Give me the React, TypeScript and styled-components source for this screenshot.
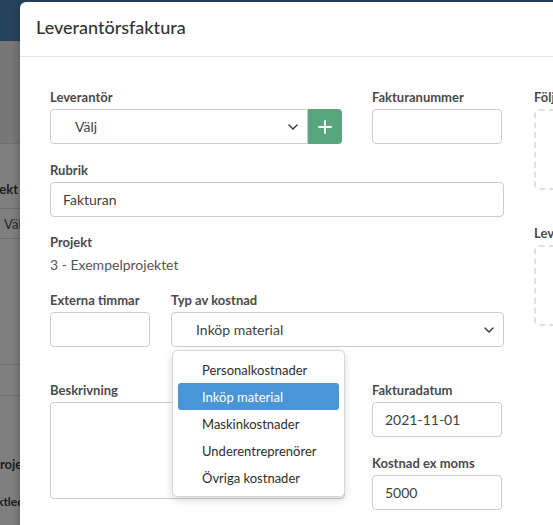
import React from 'react';
import styled, { createGlobalStyle } from 'styled-components';

const GlobalStyle = createGlobalStyle`
    html, body {
        margin: 0;
        padding: 0;
        width: 553px;
        height: 525px;
        overflow: hidden;
        font-family: Lato, "Open Sans", sans-serif;
    }
`;

const costTypes = ['Personalkostnader', 'Inköp material', 'Maskinkostnader', 'Underentreprenörer', 'Övriga kostnader'];

const Chevron: React.FC = () => (
    <svg width="10" height="6" viewBox="0 0 10 6">
        <path d="M1 1l4 4 4-4" fill="none" stroke="#333" strokeWidth="1.4" strokeLinecap="round" strokeLinejoin="round" />
    </svg>
);

const PlusIcon: React.FC = () => (
    <svg width="14" height="14" viewBox="0 0 14 14">
        <path d="M7 1v12M1 7h12" stroke="#fff" strokeWidth="2" strokeLinecap="round" />
    </svg>
);

export default function App() {
    return (
        <>
            <GlobalStyle />
            <Page>
                <TopBar />
                <Toolbar />
                <TableHead>
                    <HeadText>Projekt</HeadText>
                </TableHead>
                <TableRow>
                    <RowText>Välj</RowText>
                </TableRow>
                <EmptyRow height={125} />
                <EmptyRow height={30} />
                <FooterArea>
                    <FooterText offset={-8}>Projekt</FooterText>
                    <FooterText offset={-31} small>
                        Projektledare
                    </FooterText>
                </FooterArea>
            </Page>
            <Modal>
                <ModalHeader>
                    <Title>Leverantörsfaktura</Title>
                </ModalHeader>
                <Body>
                    <Main>
                        <Row cols="292px 130px" gap={30} mb={18}>
                            <div>
                                <Label>Leverantör</Label>
                                <InputGroup>
                                    <Select width={258} pad={24} grouped>
                                        <span>Välj</span>
                                        <Chevron />
                                    </Select>
                                    <AddButton>
                                        <PlusIcon />
                                    </AddButton>
                                </InputGroup>
                            </div>
                            <div>
                                <Label>Fakturanummer</Label>
                                <Input />
                            </div>
                        </Row>
                        <Row cols="1fr" gap={0} mb={17}>
                            <div>
                                <Label>Rubrik</Label>
                                <Input>Fakturan</Input>
                            </div>
                        </Row>
                        <Row cols="1fr" gap={0} mb={17}>
                            <div>
                                <Label>Projekt</Label>
                                <Value>3 - Exempelprojektet</Value>
                            </div>
                        </Row>
                        <Row cols="100px 333px" gap={21} mb={35}>
                            <div>
                                <Label>Externa timmar</Label>
                                <Input />
                            </div>
                            <SelectField>
                                <Label>Typ av kostnad</Label>
                                <Select width={333} pad={24}>
                                    <span>Inköp material</span>
                                    <Chevron />
                                </Select>
                                <Menu>
                                    {costTypes.map((t) => (
                                        <MenuItem key={t} active={t === 'Inköp material'}>
                                            {t}
                                        </MenuItem>
                                    ))}
                                </Menu>
                            </SelectField>
                        </Row>
                        <Row cols="295px 130px" gap={27} mb={0}>
                            <div>
                                <Label>Beskrivning</Label>
                                <TextArea />
                            </div>
                            <Stack>
                                <div>
                                    <Label>Fakturadatum</Label>
                                    <Input>2021-11-01</Input>
                                </div>
                                <div>
                                    <Label>Kostnad ex moms</Label>
                                    <Input>5000</Input>
                                </div>
                            </Stack>
                        </Row>
                    </Main>
                    <Side>
                        <div>
                            <Label>Följesedel</Label>
                            <DropZone />
                        </div>
                        <div>
                            <Label>Leverantörsfaktura</Label>
                            <DropZone />
                        </div>
                    </Side>
                </Body>
            </Modal>
        </>
    );
}

const Page = styled.div`
    width: 553px;
    height: 525px;
    background: #7f7f7f;
    display: flex;
    flex-direction: column;
`;

const TopBar = styled.div`
    height: 41px;
    background: #26435c;
    flex-shrink: 0;
`;

const Toolbar = styled.div`
    height: 102px;
    background: #777777;
    border-bottom: 1px solid #6e6e6e;
    flex-shrink: 0;
`;

const TableHead = styled.div`
    height: 65px;
    display: flex;
    align-items: center;
    justify-content: flex-end;
    width: 20px;
    overflow: hidden;
    border-bottom: 1px solid #6a6a6a;
    box-sizing: border-box;
    padding: 25px 2px 0 0;
    flex-shrink: 0;
`;

const HeadText = styled.div`
    font-size: 13px;
    font-weight: 700;
    color: #1c1c1c;
    white-space: nowrap;
`;

const TableRow = styled.div`
    height: 30px;
    display: flex;
    align-items: center;
    width: 20px;
    overflow: hidden;
    border-bottom: 1px solid #6a6a6a;
    box-sizing: border-box;
    padding-left: 4px;
    flex-shrink: 0;
`;

const RowText = styled.div`
    font-size: 13px;
    color: #262626;
    white-space: nowrap;
`;

const EmptyRow = styled.div<{ height: number }>`
    height: ${(p) => p.height}px;
    width: 20px;
    border-bottom: 1px solid #6e6e6e;
    flex-shrink: 0;
`;

const FooterArea = styled.div`
    width: 20px;
    overflow: hidden;
    display: flex;
    flex-direction: column;
    gap: 22px;
    padding-top: 60px;
`;

const FooterText = styled.div<{ offset: number; small?: boolean }>`
    margin-left: ${(p) => p.offset}px;
    font-size: ${(p) => (p.small ? 12 : 13)}px;
    font-weight: 700;
    color: #1c1c1c;
    white-space: nowrap;
`;

const Modal = styled.div`
    position: absolute;
    left: 20px;
    top: 2px;
    width: 640px;
    height: 560px;
    background: #fff;
    border-radius: 6px;
    box-shadow: 0 3px 9px rgba(0, 0, 0, 0.3);
`;

const ModalHeader = styled.div`
    height: 55px;
    box-sizing: border-box;
    border-bottom: 1px solid #e5e5e5;
    display: flex;
    align-items: center;
    padding: 0 16px 4px;
`;

const Title = styled.h4`
    margin: 0;
    font-size: 18px;
    font-weight: 500;
    color: #333;
`;

const Body = styled.div`
    display: flex;
    gap: 30px;
    padding: 32px 30px 0;
`;

const Main = styled.div`
    width: 454px;
    display: flex;
    flex-direction: column;
`;

const Row = styled.div<{ cols: string; gap: number; mb: number }>`
    display: grid;
    grid-template-columns: ${(p) => p.cols};
    column-gap: ${(p) => p.gap}px;
    margin-bottom: ${(p) => p.mb}px;
    align-items: start;
`;

const Label = styled.label`
    display: block;
    font-size: 13px;
    line-height: 16px;
    font-weight: 700;
    color: #4a4a4a;
    margin-bottom: 4px;
    white-space: nowrap;
`;

const Value = styled.div`
    font-size: 14px;
    line-height: 20px;
    color: #555;
    margin-top: 5px;
`;

const Input = styled.div`
    height: 35px;
    box-sizing: border-box;
    border: 1px solid #c8cdd2;
    border-radius: 4px;
    padding: 0 12px;
    display: flex;
    align-items: center;
    font-size: 14px;
    color: #3f3f3f;
`;

const TextArea = styled.div`
    height: 97px;
    box-sizing: border-box;
    border: 1px solid #c8cdd2;
    border-radius: 4px;
`;

const InputGroup = styled.div`
    display: flex;
`;

const Select = styled.div<{ width: number; pad: number; grouped?: boolean }>`
    width: ${(p) => p.width}px;
    height: 35px;
    box-sizing: border-box;
    border: 1px solid #c8cdd2;
    border-radius: ${(p) => (p.grouped ? '4px 0 0 4px' : '4px')};
    padding: 0 9px 0 ${(p) => p.pad}px;
    display: flex;
    align-items: center;
    justify-content: space-between;
    font-size: 14px;
    color: #3f3f3f;
`;

const AddButton = styled.button`
    width: 34px;
    height: 35px;
    border: none;
    border-radius: 0 4px 4px 0;
    background: #58a67e;
    display: flex;
    align-items: center;
    justify-content: center;
    padding: 0;
`;

const SelectField = styled.div`
    position: relative;
`;

const Menu = styled.div`
    position: absolute;
    left: 1px;
    top: 58px;
    width: 173px;
    box-sizing: border-box;
    padding: 5px;
    background: #fff;
    border: 1px solid #d6d6d6;
    border-radius: 5px;
    box-shadow: 0 3px 8px rgba(0, 0, 0, 0.15);
    z-index: 10;
`;

const MenuItem = styled.div<{ active?: boolean }>`
    height: 27px;
    display: flex;
    align-items: center;
    padding-left: 24px;
    border-radius: 3px;
    font-size: 13px;
    color: ${(p) => (p.active ? '#fff' : '#2e2e2e')};
    background: ${(p) => (p.active ? '#4a94d8' : 'transparent')};
`;

const Stack = styled.div`
    display: flex;
    flex-direction: column;
    gap: 18px;
`;

const Side = styled.div`
    display: flex;
    flex-direction: column;
    gap: 35px;
    width: 200px;
`;

const DropZone = styled.div`
    height: 81px;
    margin-top: 2px;
    box-sizing: border-box;
    border: 2px dashed #e0e0e0;
    border-radius: 5px;
`;
